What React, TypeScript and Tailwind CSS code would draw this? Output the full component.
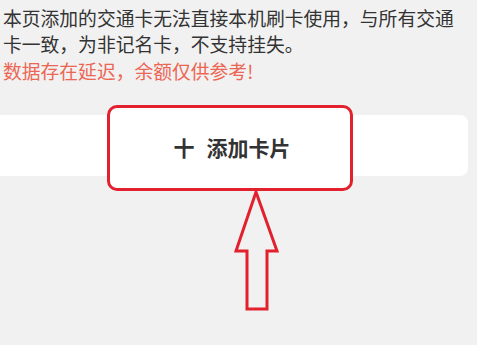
export default function App() {
  return (
    <div
      className="relative h-[345px] w-[477px] overflow-hidden bg-[#f1f1f1]"
      style={{ fontFamily: '"Noto Sans CJK SC", "Noto Sans", sans-serif' }}
    >
      {/* 안내 문구 */}
      <div className="pl-[3px] pr-[12px] pt-[5px] text-[18.8px] leading-[26px]">
        <p className="text-[#333]">
          本页添加的交通卡无法直接本机刷卡使用，与所有交通卡一致，为非记名卡，不支持挂失。
        </p>
        <p className="mt-[1px] text-[#ec6654]">数据存在延迟，余额仅供参考!</p>
      </div>

      {/* 카드 추가 버튼 */}
      <div className="relative -ml-[8px] mr-[9px] mt-[31px] h-[61px] rounded-lg bg-white">
        <div className="absolute left-[115px] top-[-10px] flex h-[86px] w-[246px] items-center justify-center rounded-[10px] border-[3px] border-[#e3202e] bg-white">
          <span className="ml-[4px] text-[21px] font-bold text-[#333]">十</span>
          <span className="ml-[12px] text-[21px] font-bold text-[#333]">添加卡片</span>
        </div>
      </div>

      {/* 화살표 */}
      <svg className="absolute left-0 top-0" width="477" height="345" viewBox="0 0 477 345">
        <polygon
          points="256,192 277,251 267,251 267,309 247,309 247,251 236,251"
          fill="none"
          stroke="#e3202e"
          strokeWidth="3"
          strokeLinejoin="miter"
        />
      </svg>
    </div>
  )
}
